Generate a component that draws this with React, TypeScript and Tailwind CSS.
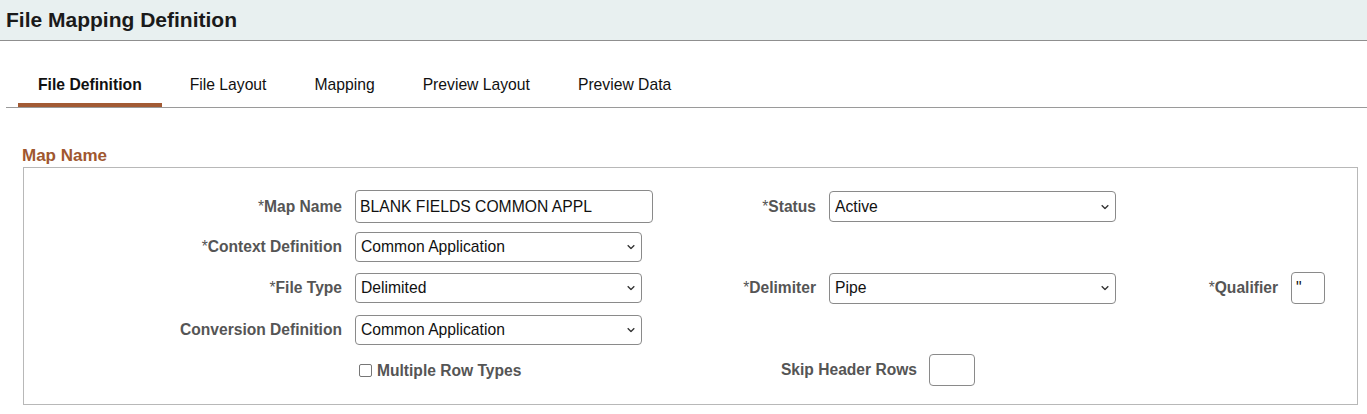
import { ReactNode } from 'react';

const TABS = ['File Definition', 'File Layout', 'Mapping', 'Preview Layout', 'Preview Data'];

function Label({ children, required }: { children: ReactNode; required?: boolean }) {
  return (
    <div className="pr-[13px] text-right text-[15.6px] font-bold leading-[18px] text-[#555]">
      {required && <span className="font-normal">*</span>}
      {children}
    </div>
  );
}

function Chevron() {
  return (
    <svg
      className="pointer-events-none absolute right-[7px] top-1/2 -translate-y-1/2"
      width="8"
      height="5"
      viewBox="0 0 8 5"
      fill="none"
    >
      <path d="M0.7 0.7 L4 4 L7.3 0.7" stroke="#333" strokeWidth="1.3" />
    </svg>
  );
}

function Select({ value, width, height }: { value: string; width: string; height: string }) {
  return (
    <div className={`relative ${width} ${height}`}>
      <select
        defaultValue={value}
        className="h-full w-full appearance-none rounded-[4px] border border-[#8a8a8a] bg-white pl-[5px] text-[15.7px] text-[#111] outline-none"
      >
        <option>{value}</option>
      </select>
      <Chevron />
    </div>
  );
}

export default function App() {
  return (
    <div className="min-h-screen bg-white font-['Liberation_Sans',Arial,sans-serif]">
      {/* page title bar */}
      <div className="flex h-[41px] items-center border-b border-[#8f8f8f] bg-[#e8f0f0] px-[6px]">
        <h1 className="text-[21px] font-bold text-[#1a1a1a]">File Mapping Definition</h1>
      </div>

      {/* tabs */}
      <div className="ml-[6px] flex border-b border-[#9a9a9a] pl-[12px] pt-[21px]">
        {TABS.map((t, i) => (
          <div
            key={t}
            className={
              i === 0
                ? 'mr-2 flex h-[45px] items-center border-b-4 border-[#a25a34] px-5 pt-[5px] text-[15.7px] font-bold text-[#111]'
                : 'mr-2 flex h-[45px] items-center border-b-4 border-transparent px-5 pt-[5px] text-[15.7px] text-[#111]'
            }
          >
            {t}
          </div>
        ))}
      </div>

      {/* group box */}
      <h2 className="ml-[22px] mt-[38px] h-[20px] text-[17px] font-bold leading-[20px] text-[#a0572f]">Map Name</h2>
      <div className="ml-[23px] mr-[9px] mt-[1px] border border-[#b8b8b8] pb-[18px] pt-[22px]">
        <div className="grid grid-cols-[331px_298px_176px_286px_176px_34px] grid-rows-[33px_30px_34px_31px_32px] items-center gap-y-[9px]">
          {/* row 1 */}
          <Label required>Map Name</Label>
          <input
            defaultValue="BLANK FIELDS COMMON APPL"
            className="h-[33px] w-[298px] rounded-[4px] border border-[#8a8a8a] px-[4px] text-[15.7px] text-[#111] outline-none"
          />
          <Label required>Status</Label>
          <Select value="Active" width="w-[287px]" height="h-[31px]" />
          <div />
          <div />

          {/* row 2 */}
          <Label required>Context Definition</Label>
          <Select value="Common Application" width="w-[287px]" height="h-[30px]" />
          <div />
          <div />
          <div />
          <div />

          {/* row 3 */}
          <Label required>File Type</Label>
          <Select value="Delimited" width="w-[287px]" height="h-[30px]" />
          <Label required>Delimiter</Label>
          <Select value="Pipe" width="w-[287px]" height="h-[31px]" />
          <Label required>Qualifier</Label>
          <input
            defaultValue={'"'}
            className="h-[32px] w-[34px] rounded-[4px] border border-[#8a8a8a] px-[4px] text-[15.7px] text-[#111] outline-none"
          />

          {/* row 4 */}
          <Label>Conversion Definition</Label>
          <Select value="Common Application" width="w-[287px]" height="h-[30px]" />
          <div />
          <div />
          <div />
          <div />

          {/* row 5 */}
          <div />
          <label className="flex items-center pl-[4px] pt-[2px]">
            <span className="h-[13px] w-[13px] rounded-[2px] border border-[#767676] bg-white" />
            <span className="ml-[5px] text-[15.6px] font-bold text-[#555]">Multiple Row Types</span>
          </label>
          <div className="col-span-2 flex items-center">
            <div className="w-[276px] pr-3 text-right text-[15.6px] font-bold text-[#555]">Skip Header Rows</div>
            <input className="h-[32px] w-[46px] rounded-[4px] border border-[#8a8a8a] outline-none" />
          </div>
          <div />
          <div />
        </div>
      </div>
    </div>
  );
}
